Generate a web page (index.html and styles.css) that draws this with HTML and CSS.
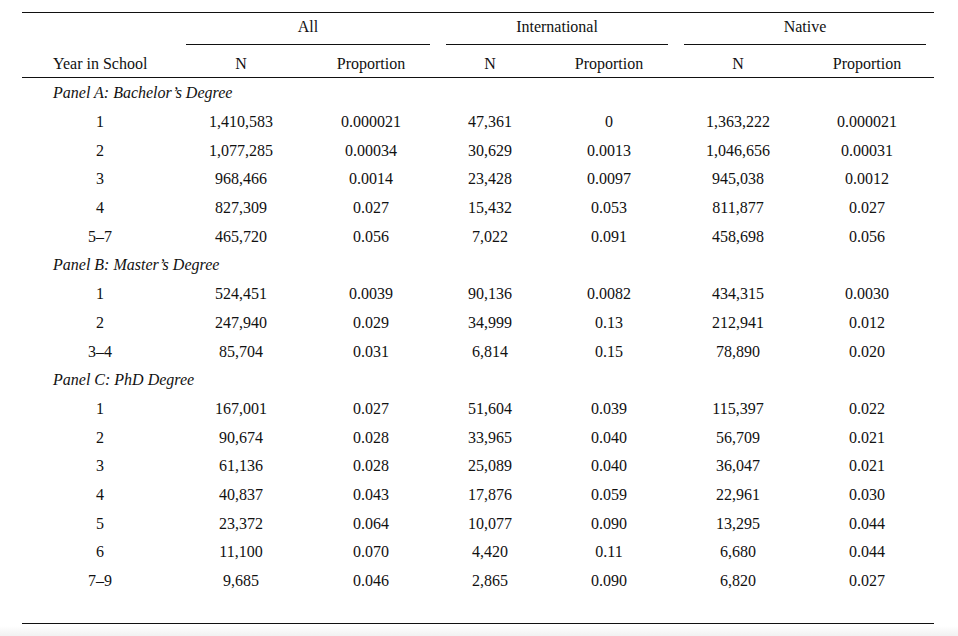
FILE: index.html
```html
<!DOCTYPE html>
<html>
<head>
<meta charset="utf-8">
<link rel="stylesheet" href="styles.css">
</head>
<body>
<div class="page">
  <div class="table-wrap">
    <table class="stats">
      <colgroup>
        <col class="c-label">
        <col class="c-n1">
        <col class="c-p1">
        <col class="c-n2">
        <col class="c-p2">
        <col class="c-n3">
        <col class="c-p3">
      </colgroup>
      <thead>
        <tr class="group-row">
          <th></th>
          <th colspan="2"><span class="group">All</span></th>
          <th colspan="2"><span class="group">International</span></th>
          <th colspan="2"><span class="group">Native</span></th>
        </tr>
        <tr class="head-row">
          <th class="label-head">Year in School</th>
          <th>N</th>
          <th>Proportion</th>
          <th>N</th>
          <th>Proportion</th>
          <th>N</th>
          <th>Proportion</th>
        </tr>
      </thead>
      <tbody>
        <tr class="panel"><td colspan="7">Panel A: Bachelor’s Degree</td></tr>
        <tr><td>1</td><td>1,410,583</td><td>0.000021</td><td>47,361</td><td>0</td><td>1,363,222</td><td>0.000021</td></tr>
        <tr><td>2</td><td>1,077,285</td><td>0.00034</td><td>30,629</td><td>0.0013</td><td>1,046,656</td><td>0.00031</td></tr>
        <tr><td>3</td><td>968,466</td><td>0.0014</td><td>23,428</td><td>0.0097</td><td>945,038</td><td>0.0012</td></tr>
        <tr><td>4</td><td>827,309</td><td>0.027</td><td>15,432</td><td>0.053</td><td>811,877</td><td>0.027</td></tr>
        <tr><td>5–7</td><td>465,720</td><td>0.056</td><td>7,022</td><td>0.091</td><td>458,698</td><td>0.056</td></tr>
        <tr class="panel"><td colspan="7">Panel B: Master’s Degree</td></tr>
        <tr><td>1</td><td>524,451</td><td>0.0039</td><td>90,136</td><td>0.0082</td><td>434,315</td><td>0.0030</td></tr>
        <tr><td>2</td><td>247,940</td><td>0.029</td><td>34,999</td><td>0.13</td><td>212,941</td><td>0.012</td></tr>
        <tr><td>3–4</td><td>85,704</td><td>0.031</td><td>6,814</td><td>0.15</td><td>78,890</td><td>0.020</td></tr>
        <tr class="panel"><td colspan="7">Panel C: PhD Degree</td></tr>
        <tr><td>1</td><td>167,001</td><td>0.027</td><td>51,604</td><td>0.039</td><td>115,397</td><td>0.022</td></tr>
        <tr><td>2</td><td>90,674</td><td>0.028</td><td>33,965</td><td>0.040</td><td>56,709</td><td>0.021</td></tr>
        <tr><td>3</td><td>61,136</td><td>0.028</td><td>25,089</td><td>0.040</td><td>36,047</td><td>0.021</td></tr>
        <tr><td>4</td><td>40,837</td><td>0.043</td><td>17,876</td><td>0.059</td><td>22,961</td><td>0.030</td></tr>
        <tr><td>5</td><td>23,372</td><td>0.064</td><td>10,077</td><td>0.090</td><td>13,295</td><td>0.044</td></tr>
        <tr><td>6</td><td>11,100</td><td>0.070</td><td>4,420</td><td>0.11</td><td>6,680</td><td>0.044</td></tr>
        <tr><td>7–9</td><td>9,685</td><td>0.046</td><td>2,865</td><td>0.090</td><td>6,820</td><td>0.027</td></tr>
      </tbody>
    </table>
  </div>
</div>
<div class="shade"></div>
</body>
</html>
```

FILE: styles.css
```css
html, body {
  margin: 0;
  padding: 0;
  background: #ffffff;
}

body {
  width: 958px;
  height: 636px;
  overflow: hidden;
  font-family: "Liberation Serif", "Times New Roman", serif;
  font-size: 16px;
  color: #111111;
}

.page {
  padding: 12px 24px 0 22px;
  height: 614px;
}

.table-wrap {
  width: 912px;
  border-top: 1px solid #111;
  border-bottom: 1px solid #111;
  padding-bottom: 29px;
}

.stats {
  width: 912px;
  table-layout: fixed;
  border-collapse: separate;
  border-spacing: 0;
}

.c-label { width: 156px; }
.c-n1 { width: 126px; }
.c-p1 { width: 134px; }
.c-n2 { width: 104px; }
.c-p2 { width: 134px; }
.c-n3 { width: 124px; }
.c-p3 { width: 134px; }

.stats th {
  font-weight: normal;
  text-align: center;
  line-height: 20px;
  padding: 0;
}

.group-row th {
  padding-top: 4px;
}

.group {
  display: block;
  margin: 0 8px;
  padding-bottom: 7px;
  border-bottom: 1px solid #111;
  line-height: 20px;
}

.head-row th {
  padding-top: 9px;
  padding-bottom: 3px;
  border-bottom: 1px solid #111;
}

.stats th.label-head {
  text-align: left;
  padding-left: 31px;
}

.stats td {
  height: 26.7px;
  padding: 2px 0 0;
  text-align: center;
  vertical-align: middle;
  line-height: 20px;
}

.panel td {
  text-align: left;
  font-style: italic;
  padding-left: 31px;
}

.shade {
  position: absolute;
  left: 0;
  top: 626px;
  width: 958px;
  height: 10px;
  background: linear-gradient(to bottom, rgba(240, 240, 240, 0), #f1f1f1);
}
```
